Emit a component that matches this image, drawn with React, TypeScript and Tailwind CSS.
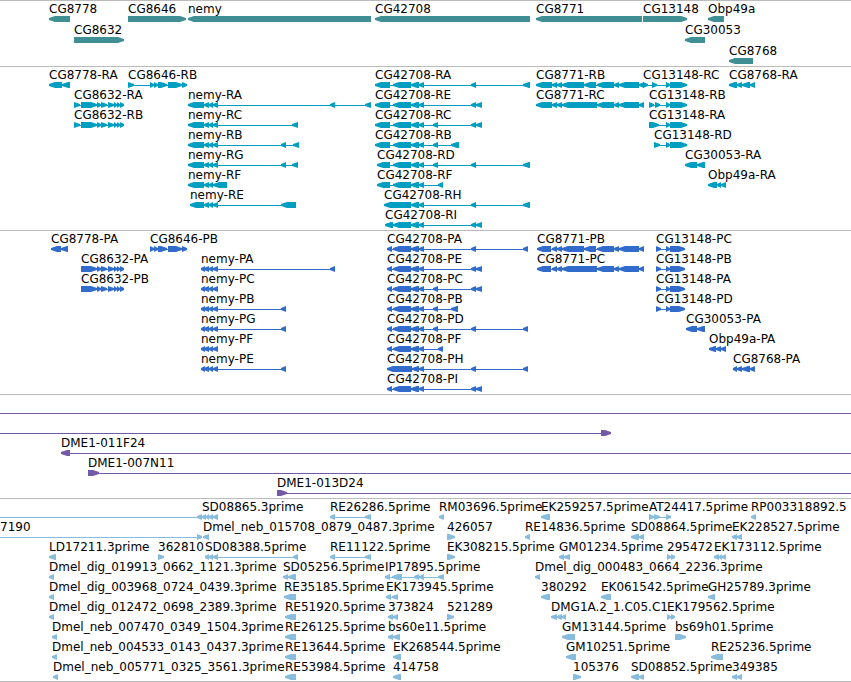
type Strand = "+" | "-"

// [name, strand, exons], exons are "start:end" pairs in track pixels
type Feature = [string, Strand, string]

interface Track {
  id: string
  color: string
  rowClass: string
  rows: Feature[][]
}

const CG8632 = "81:97 97:101 101:107 108:114 114:117 117:120 120:124"
const CG8646 = "150:154 154:158 158:167 168:182 182:187"
const NEMY = "204:209 209:213 213:218"
const CG42708 = "393:411 411:419 419:424"
const CG8771_B = "552:557 557:562 562:584 584:596 597:614 614:619 619:639 639:644"
const CG8771_C = "552:557 557:562 562:597 597:614 614:619 619:639 639:644"

const tracks: Track[] = [
  {
    id: "Genes",
    color: "text-[#3f8f94]",
    rowClass: "h-[21px]",
    rows: [
      [
        ["CG8778", "-", "49:70"],
        ["CG8646", "+", "128:186"],
        ["nemy", "-", "188:371"],
        ["CG42708", "-", "375:530"],
        ["CG8771", "-", "536:642"],
        ["CG13148", "+", "643:687"],
        ["Obp49a", "-", "708:724"],
      ],
      [
        ["CG8632", "+", "74:124"],
        ["CG30053", "-", "685:705"],
      ],
      [["CG8768", "-", "729:753"]],
    ],
  },
  {
    id: "Transcripts",
    color: "text-[#009fc1]",
    rowClass: "h-5",
    rows: [
      [
        ["CG8778-RA", "-", "49:62 62:70"],
        ["CG8646-RB", "+", "128:134 " + CG8646],
        ["CG42708-RA", "-", `375:390 ${CG42708} 471:476 523:530`],
        ["CG8771-RB", "-", `536:552 ${CG8771_B}`],
        ["CG13148-RC", "+", "643:648 652:657 666:670 670:687"],
        ["CG8768-RA", "-", "729:737 737:742 742:750 750:755"],
      ],
      [
        ["CG8632-RA", "+", `74:80 ${CG8632}`],
        ["nemy-RA", "-", `188:204 ${NEMY} 330:335 365:371`],
        ["CG42708-RE", "-", `375:390 ${CG42708} 471:476 476:482`],
        ["CG8771-RC", "-", `536:552 ${CG8771_C}`],
        ["CG13148-RB", "+", "649:654 655:660 666:670 670:687"],
      ],
      [
        ["CG8632-RB", "+", `74:80 ${CG8632}`],
        ["nemy-RC", "-", `188:204 ${NEMY} 292:298`],
        ["CG42708-RC", "-", `375:390 ${CG42708} 433:438 471:476 476:482`],
        ["CG13148-RA", "+", "649:659 666:670 670:687"],
      ],
      [
        ["nemy-RB", "-", `188:204 ${NEMY} 281:286 293:299`],
        ["CG42708-RB", "-", `375:390 ${CG42708} 433:438 451:459`],
        ["CG13148-RD", "+", "654:660 666:670 670:687"],
      ],
      [
        ["nemy-RG", "-", `188:204 ${NEMY} 281:286 292:298`],
        ["CG42708-RD", "-", `377:390 ${CG42708} 433:438 471:476 523:530`],
        ["CG30053-RA", "-", "685:697 697:705"],
      ],
      [
        ["nemy-RF", "-", "188:204 204:209 209:213 213:227"],
        ["CG42708-RF", "-", `377:390 ${CG42708} 438:443`],
        ["Obp49a-RA", "-", "708:717 717:721 721:726"],
      ],
      [
        ["nemy-RE", "-", `190:204 ${NEMY} 281:296`],
        ["CG42708-RH", "-", "384:411 411:419 419:424 471:476 523:530"],
      ],
      [["CG42708-RI", "-", `385:393 ${CG42708} 471:476 476:482`]],
    ],
  },
  {
    id: "Proteins",
    color: "text-[#316ccc]",
    rowClass: "h-5",
    rows: [
      [
        ["CG8778-PA", "-", "51:61 61:68"],
        ["CG8646-PB", "+", CG8646],
        ["CG42708-PA", "-", `387:392 ${CG42708} 471:476 523:528`],
        ["CG8771-PB", "-", `537:551 ${CG8771_B}`],
        ["CG13148-PC", "+", "656:661 666:670 670:685"],
      ],
      [
        ["CG8632-PA", "+", CG8632],
        ["nemy-PA", "-", `201:205 ${NEMY} 330:335`],
        ["CG42708-PE", "-", `387:392 ${CG42708} 471:476 476:482`],
        ["CG8771-PC", "-", `537:551 ${CG8771_C}`],
        ["CG13148-PB", "+", "656:661 666:670 670:685"],
      ],
      [
        ["CG8632-PB", "+", CG8632],
        ["nemy-PC", "-", `201:205 ${NEMY}`],
        ["CG42708-PC", "-", `387:392 ${CG42708} 433:438 471:476 476:482`],
        ["CG13148-PA", "+", "656:661 666:670 670:685"],
      ],
      [
        ["nemy-PB", "-", `201:205 ${NEMY} 281:286`],
        ["CG42708-PB", "-", `387:392 ${CG42708} 433:438 451:458`],
        ["CG13148-PD", "+", "656:661 666:670 670:685"],
      ],
      [
        ["nemy-PG", "-", `201:205 ${NEMY} 281:286`],
        ["CG42708-PD", "-", `387:392 ${CG42708} 433:438 471:476 523:528`],
        ["CG30053-PA", "-", "686:697 697:705"],
      ],
      [
        ["nemy-PF", "-", `201:205 ${NEMY}`],
        ["CG42708-PF", "-", `387:392 ${CG42708} 438:443`],
        ["Obp49a-PA", "-", "709:716 716:721 721:726"],
      ],
      [
        ["nemy-PE", "-", `201:205 ${NEMY} 281:286`],
        ["CG42708-PH", "-", "387:412 412:419 419:424 471:476 523:528"],
        ["CG8768-PA", "-", "733:737 737:742 742:750 750:755"],
      ],
      [["CG42708-PI", "-", `387:392 ${CG42708} 471:476 476:482`]],
    ],
  },
  {
    id: "BACs",
    color: "text-[#7459a9]",
    rowClass: "h-5",
    rows: [
      [["", "+", "-50:-40 4000:4010"]],
      [["", "+", "-50:-40 601:611"]],
      [["DME1-011F24", "-", "61:70 4000:4010"]],
      [["DME1-007N11", "+", "88:99 4000:4010"]],
      [["DME1-013D24", "+", "277:287 4000:4010"]],
    ],
  },
  {
    id: "ESTs",
    color: "text-[#88bcdd]",
    rowClass: "h-5",
    rows: [
      [
        ["", "-", "-50:-40 197:202"],
        ["SD08865.3prime", "-", "202:206 206:209 209:213 213:218"],
        ["RE26286.5prime", "-", "330:335 365:371"],
        ["RM03696.5prime", "-", "439:444"],
        ["EK259257.5prime", "-", "541:550"],
        ["AT24417.5prime", "+", "649:654 654:660 666:671"],
        ["RP003318892.5", "-", "751:756"],
      ],
      [
        ["7190", "+", "0:0 197:202"],
        ["Dmel_neb_015708_0879_0487.3prime", "-", "203:209"],
        ["426057", "+", "447:455"],
        ["RE14836.5prime", "-", "525:530"],
        ["SD08864.5prime", "-", "631:639 639:644"],
        ["EK228527.5prime", "-", "732:737 737:742"],
      ],
      [
        ["LD17211.3prime", "-", "49:56"],
        ["362810", "+", "158:164"],
        ["SD08388.5prime", "-", "205:209 209:213 213:218 293:298"],
        ["RE11122.5prime", "-", "330:335 365:371"],
        ["EK308215.5prime", "+", "447:455"],
        ["GM01234.5prime", "-", "559:564 564:570"],
        ["295472", "+", "667:671 671:675"],
        ["EK173112.5prime", "-", "714:719 719:722 722:726"],
      ],
      [
        ["Dmel_dig_019913_0662_1121.3prime", "-", "49:54"],
        ["SD05256.5prime", "-", "283:288 288:296"],
        ["IP17895.5prime", "-", "385:390 392:402 414:419 419:424 438:444"],
        ["Dmel_dig_000483_0664_2236.3prime", "-", "535:540"],
      ],
      [
        ["Dmel_dig_003968_0724_0439.3prime", "-", "49:54"],
        ["RE35185.5prime", "-", "284:296"],
        ["EK173945.5prime", "-", "386:391 392:398"],
        ["380292", "-", "541:550"],
        ["EK061542.5prime", "-", "601:611"],
        ["GH25789.3prime", "-", "708:715"],
      ],
      [
        ["Dmel_dig_012472_0698_2389.3prime", "-", "49:54"],
        ["RE51920.5prime", "-", "285:296"],
        ["373824", "-", "388:393 393:398"],
        ["521289", "+", "447:454"],
        ["DMG1A.2_1.C05.C1", "-", "551:557 557:562 562:566"],
        ["EK179562.5prime", "+", "667:671 671:675"],
      ],
      [
        ["Dmel_neb_007470_0349_1504.3prime", "-", "52:57"],
        ["RE26125.5prime", "-", "285:296"],
        ["bs60e11.5prime", "-", "388:393 393:400"],
        ["GM13144.5prime", "-", "562:575"],
        ["bs69h01.5prime", "+", "675:686"],
      ],
      [
        ["Dmel_neb_004533_0143_0437.3prime", "-", "52:57"],
        ["RE13644.5prime", "-", "285:296"],
        ["EK268544.5prime", "-", "393:401"],
        ["GM10251.5prime", "-", "566:576"],
        ["RE25236.5prime", "-", "711:723"],
      ],
      [
        ["Dmel_neb_005771_0325_3561.3prime", "-", "53:58"],
        ["RE53984.5prime", "-", "285:296"],
        ["414758", "-", "393:401"],
        ["105376", "+", "573:581"],
        ["SD08852.5prime", "-", "631:639 639:644"],
        ["349385", "-", "732:737 737:742"],
      ],
    ],
  },
]

// block arrow, 6px high with a blunt 2px tip, pointing along the strand
function arrowPoints(start: number, end: number, strand: Strand) {
  const head = Math.min(end - start, 6)
  const tip = strand === "+" ? end : start
  const tail = strand === "+" ? start : end
  const neck = strand === "+" ? end - head : start + head
  return `${tip},2 ${neck},0 ${tail},0 ${tail},6 ${neck},6 ${tip},4`
}

function FeatureGlyph({ feature, color }: { feature: Feature; color: string }) {
  const [name, strand, spans] = feature
  const exons = spans.split(" ").map((span) => span.split(":").map(Number))
  const left = exons[0][0]
  const width = exons[exons.length - 1][1] - left

  return (
    <li className="absolute top-0" style={{ left }}>
      <span className="block h-[14px] whitespace-nowrap">{name}</span>
      <svg className={`block h-[6px] ${color}`} width={width} height={6} fill="currentColor" aria-hidden="true">
        <rect x={0} y={3} width={width} height={1} />
        {exons
          .filter(([start, end]) => end > start)
          .map(([start, end]) => (
            <polygon key={start} points={arrowPoints(start - left, end - left, strand)} />
          ))}
      </svg>
    </li>
  )
}

function TrackPanel({ track }: { track: Track }) {
  return (
    <section aria-label={track.id} className="border-t border-[#bbbbbb] pt-px pb-0.5 first:pb-px last:border-b last:pb-px">
      {track.rows.map((row, i) => (
        <ul key={i} className={`relative ${track.rowClass}`}>
          {row.map((feature) => (
            <FeatureGlyph key={feature[0] + feature[2]} feature={feature} color={track.color} />
          ))}
        </ul>
      ))}
    </section>
  )
}

export default function App() {
  return (
    <main className="w-full overflow-hidden bg-white font-['DejaVu_Sans',sans-serif] text-[12px] leading-[14px] text-black">
      {tracks.map((track) => (
        <TrackPanel key={track.id} track={track} />
      ))}
    </main>
  )
}
